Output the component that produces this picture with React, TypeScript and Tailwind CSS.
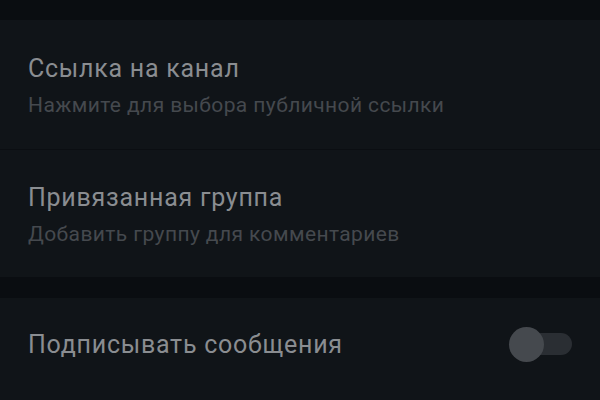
export default function App() {
  return (
    <div
      className="w-[600px] h-[400px] overflow-hidden bg-[#0a0d11]"
      style={{ fontFamily: "Roboto, 'Noto Sans', sans-serif" }}
    >
      <div className="h-[20px]" />
      <div className="bg-[#101418]">
        <div className="h-[130px] px-[28px] pt-[35px] border-b border-[#0b0e12]">
          <p className="text-[25px] leading-[28px] tracking-[0.75px] text-[#8a8d91]">
            Ссылка на канал
          </p>
          <p className="text-[21px] leading-[24px] tracking-[0.4px] mt-[10px] text-[#45494e]">
            Нажмите для выбора публичной ссылки
          </p>
        </div>
        <div className="h-[127px] px-[28px] pt-[34px]">
          <p className="text-[25px] leading-[28px] tracking-[0.75px] text-[#8a8d91]">
            Привязанная группа
          </p>
          <p className="text-[21px] leading-[24px] tracking-[0.4px] mt-[10px] text-[#45494e]">
            Добавить группу для комментариев
          </p>
        </div>
      </div>
      <div className="h-[21px]" />
      <div className="bg-[#101418] h-[102px] px-[28px] pt-[33px]">
        <div className="flex items-center justify-between h-[28px]">
          <p className="text-[25px] leading-[28px] tracking-[0.75px] text-[#8a8d91]">
            Подписывать сообщения
          </p>
          <div className="relative w-[63px] h-[34px] flex items-center -mt-[2px]">
            <div className="absolute left-[17px] right-0 h-[22px] rounded-full bg-[#2a2e33]" />
            <div className="absolute left-0 w-[35px] h-[35px] rounded-full bg-[#45494e]" />
          </div>
        </div>
      </div>
    </div>
  );
}
